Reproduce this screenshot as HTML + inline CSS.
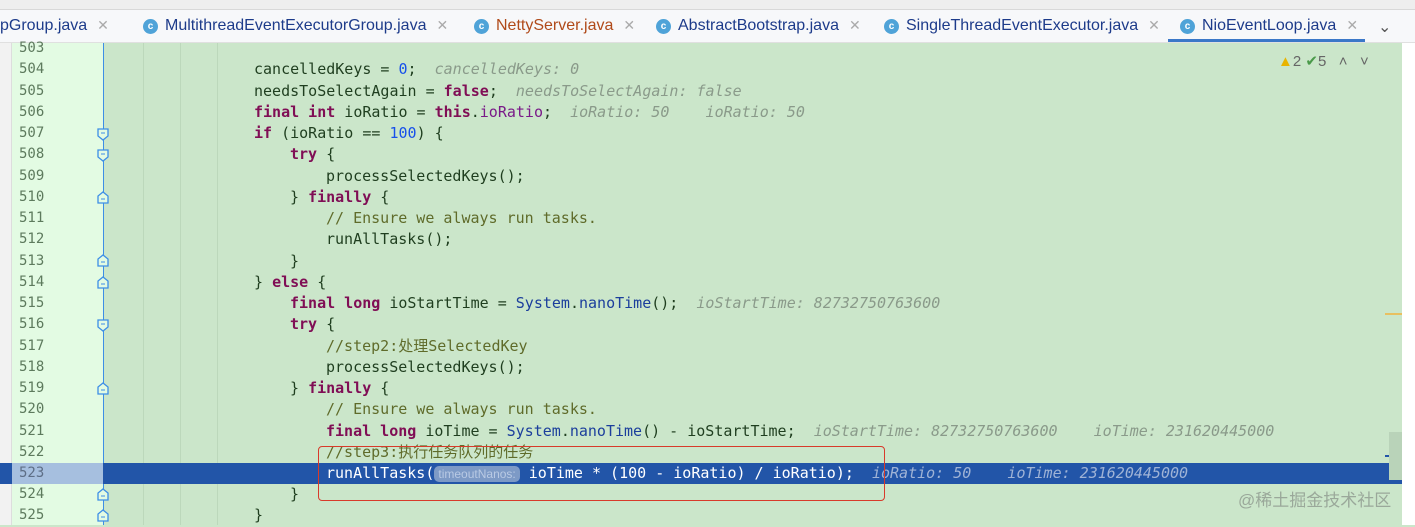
<!DOCTYPE html>
<html><head><meta charset="utf-8"><style>
*{margin:0;padding:0;box-sizing:border-box}
body{width:1415px;height:525px;overflow:hidden;background:#cbe6ca;position:relative;font-family:"DejaVu Sans Mono","Liberation Mono","Noto Sans CJK SC",monospace}
.top{position:absolute;left:0;top:0;width:1415px;height:10px;background:#eeeeee;border-bottom:1px solid #d8d8d8}
.tabs{position:absolute;left:0;top:10px;width:1415px;height:33px;background:#f7f8fa;border-bottom:1px solid #e0e0e0;font-family:"Liberation Sans","Noto Sans CJK SC",sans-serif;font-size:16px;color:#1d3b8a}
.tab{position:absolute;top:7px;white-space:nowrap}
.x{color:#aaa;font-size:14px;margin-left:10px}
.ic{display:inline-block;width:15px;height:15px;border-radius:50%;background:#4fa3d8;color:#fff;font-size:10px;text-align:center;line-height:15px;vertical-align:1px;margin-right:7px;font-weight:bold}
.left{position:absolute;left:0;top:43px;width:12px;height:482px;background:#f2f2f2;border-right:1px solid #ddd}
.gut{position:absolute;left:12px;top:43px;width:91px;height:482px;background:#e3fbe3}
.gl{position:absolute;left:103px;top:43px;width:1px;height:482px;background:#3d8ee6}
.guide{position:absolute;top:43px;width:1px;height:482px;background:#bcd8bb}
.right{position:absolute;left:1402px;top:43px;width:13px;height:482px;background:#fff}
.ln{position:absolute;left:0;width:1402px;height:21.24px;font-size:15px;line-height:21.24px;white-space:pre;color:#1f3e1f}
.num{position:absolute;left:19px;color:#5d7a5d;font-size:14px}
.code{position:absolute;left:110px}
.k{color:#800e55;font-weight:bold}
.f{color:#7a1a88}
.n{color:#1750eb}
.c{color:#5f6b2a}
.s{color:#1b3e9c}
.h{color:#8a9a8a;font-style:italic}
.sel{background:#2255a8;color:#fff}
.sel .num{color:#5d6e86}
.fold{position:absolute;left:97px;width:12px;height:13px}
</style></head><body>
<div class="top"></div>
<div class="tabs">
<span class="tab" style="left:0">pGroup.java<span class="x">✕</span></span>
<span class="tab" style="left:143px"><span class="ic">c</span>MultithreadEventExecutorGroup.java<span class="x">✕</span></span>
<span class="tab" style="left:474px;color:#b04a1a"><span class="ic">c</span>NettyServer.java<span class="x">✕</span></span>
<span class="tab" style="left:656px"><span class="ic">c</span>AbstractBootstrap.java<span class="x">✕</span></span>
<span class="tab" style="left:884px"><span class="ic">c</span>SingleThreadEventExecutor.java<span class="x">✕</span></span>
<span class="tab" style="left:1180px"><span class="ic">c</span>NioEventLoop.java<span class="x">✕</span></span>
<div style="position:absolute;left:1168px;top:29px;width:197px;height:3px;background:#3b78c8"></div>
<span class="tab" style="left:1378px;color:#555">⌄</span>
</div>
<div class="left"></div>
<div class="gut"></div>
<div class="gl"></div>
<div class="guide" style="left:143px"></div><div class="guide" style="left:180px"></div><div class="guide" style="left:217px"></div>
<div style="position:absolute;left:1278px;top:52px;font-family:'Liberation Sans',sans-serif;font-size:15px;color:#666"><span style="color:#e8b400">▲</span>2 <span style="color:#4a9a4a">✔</span>5 &nbsp;&nbsp;˄ &nbsp;&nbsp;˅</div>
<div style="position:absolute;top:38.2px;left:0;width:1402px;height:487px">
<div class="ln" style="top:0"><span class="num">503</span></div>
<div class="ln" style="top:21.24px"><span class="num">504</span><span class="code" style="left:254px">cancelledKeys = <span class="n">0</span>;  <span class="h">cancelledKeys: 0</span></span></div>
<div class="ln" style="top:42.48px"><span class="num">505</span><span class="code" style="left:254px">needsToSelectAgain = <span class="k">false</span>;  <span class="h">needsToSelectAgain: false</span></span></div>
<div class="ln" style="top:63.72px"><span class="num">506</span><span class="code" style="left:254px"><span class="k">final int</span> ioRatio = <span class="k">this</span>.<span class="f">ioRatio</span>;  <span class="h">ioRatio: 50    ioRatio: 50</span></span></div>
<div class="ln" style="top:84.96px"><span class="num">507</span><span class="code" style="left:254px"><span class="k">if</span> (ioRatio == <span class="n">100</span>) {</span></div>
<div class="ln" style="top:106.2px"><span class="num">508</span><span class="code" style="left:290px"><span class="k">try</span> {</span></div>
<div class="ln" style="top:127.44px"><span class="num">509</span><span class="code" style="left:326px">processSelectedKeys();</span></div>
<div class="ln" style="top:148.68px"><span class="num">510</span><span class="code" style="left:290px">} <span class="k">finally</span> {</span></div>
<div class="ln" style="top:169.92px"><span class="num">511</span><span class="code c" style="left:326px">// Ensure we always run tasks.</span></div>
<div class="ln" style="top:191.16px"><span class="num">512</span><span class="code" style="left:326px">runAllTasks();</span></div>
<div class="ln" style="top:212.4px"><span class="num">513</span><span class="code" style="left:290px">}</span></div>
<div class="ln" style="top:233.64px"><span class="num">514</span><span class="code" style="left:254px">} <span class="k">else</span> {</span></div>
<div class="ln" style="top:254.88px"><span class="num">515</span><span class="code" style="left:290px"><span class="k">final long</span> ioStartTime = <span class="s">System</span>.<span class="s">nanoTime</span>();  <span class="h">ioStartTime: 82732750763600</span></span></div>
<div class="ln" style="top:276.12px"><span class="num">516</span><span class="code" style="left:290px"><span class="k">try</span> {</span></div>
<div class="ln" style="top:297.36px"><span class="num">517</span><span class="code c" style="left:326px">//step2:处理SelectedKey</span></div>
<div class="ln" style="top:318.6px"><span class="num">518</span><span class="code" style="left:326px">processSelectedKeys();</span></div>
<div class="ln" style="top:339.84px"><span class="num">519</span><span class="code" style="left:290px">} <span class="k">finally</span> {</span></div>
<div class="ln" style="top:361.08px"><span class="num">520</span><span class="code c" style="left:326px">// Ensure we always run tasks.</span></div>
<div class="ln" style="top:382.32px"><span class="num">521</span><span class="code" style="left:326px"><span class="k">final long</span> ioTime = <span class="s">System</span>.<span class="s">nanoTime</span>() - ioStartTime;  <span class="h">ioStartTime: 82732750763600    ioTime: 231620445000</span></span></div>
<div class="ln" style="top:403.56px"><span class="num">522</span><span class="code c" style="left:326px">//step3:执行任务队列的任务</span></div>
<div class="ln sel" style="top:424.8px"><div style="position:absolute;left:12px;top:0;width:91px;height:100%;background:#a6bfdf"></div><span class="num">523</span><span class="code" style="left:326px">runAllTasks(<span style="font-family:'Liberation Sans',sans-serif;font-size:12px;background:#7d9ac6;color:#b9cae4;border-radius:5px;padding:1px 4px">timeoutNanos:</span> ioTime * (<span>100</span> - ioRatio) / ioRatio);  <span class="h" style="color:#9fb3d6">ioRatio: 50    ioTime: 231620445000</span></span></div>
<div class="ln" style="top:446.04px"><span class="num">524</span><span class="code" style="left:290px">}</span></div>
<div class="ln" style="top:467.28px"><span class="num">525</span><span class="code" style="left:254px">}</span></div>
</div>
<svg class="fold" style="top:128px" viewBox="0 0 12 13"><path d="M1 1H11V8L6 12L1 8Z" fill="#e3fbe3" stroke="#3d8ee6" stroke-width="1.3"/><path d="M4 5H8" stroke="#3d8ee6"/></svg>
<svg class="fold" style="top:149px" viewBox="0 0 12 13"><path d="M1 1H11V8L6 12L1 8Z" fill="#e3fbe3" stroke="#3d8ee6" stroke-width="1.3"/><path d="M4 5H8" stroke="#3d8ee6"/></svg>
<svg class="fold" style="top:191px" viewBox="0 0 12 13"><path d="M1 12H11V5L6 1L1 5Z" fill="#e3fbe3" stroke="#3d8ee6" stroke-width="1.3"/><path d="M4 8H8" stroke="#3d8ee6"/></svg>
<svg class="fold" style="top:254px" viewBox="0 0 12 13"><path d="M1 12H11V5L6 1L1 5Z" fill="#e3fbe3" stroke="#3d8ee6" stroke-width="1.3"/><path d="M4 8H8" stroke="#3d8ee6"/></svg>
<svg class="fold" style="top:276px" viewBox="0 0 12 13"><path d="M1 12H11V5L6 1L1 5Z" fill="#e3fbe3" stroke="#3d8ee6" stroke-width="1.3"/><path d="M4 8H8" stroke="#3d8ee6"/></svg>
<svg class="fold" style="top:319px" viewBox="0 0 12 13"><path d="M1 1H11V8L6 12L1 8Z" fill="#e3fbe3" stroke="#3d8ee6" stroke-width="1.3"/><path d="M4 5H8" stroke="#3d8ee6"/></svg>
<svg class="fold" style="top:382px" viewBox="0 0 12 13"><path d="M1 12H11V5L6 1L1 5Z" fill="#e3fbe3" stroke="#3d8ee6" stroke-width="1.3"/><path d="M4 8H8" stroke="#3d8ee6"/></svg>
<svg class="fold" style="top:488px" viewBox="0 0 12 13"><path d="M1 12H11V5L6 1L1 5Z" fill="#e3fbe3" stroke="#3d8ee6" stroke-width="1.3"/><path d="M4 8H8" stroke="#3d8ee6"/></svg>
<svg class="fold" style="top:509px" viewBox="0 0 12 13"><path d="M1 12H11V5L6 1L1 5Z" fill="#e3fbe3" stroke="#3d8ee6" stroke-width="1.3"/><path d="M4 8H8" stroke="#3d8ee6"/></svg>
<div style="position:absolute;left:318px;top:446px;width:567px;height:55px;border:1.5px solid #d83a2a;border-radius:4px"></div>
<div style="position:absolute;left:1238px;top:486px;font-family:'Liberation Sans','Noto Sans CJK SC',sans-serif;font-size:17px;color:#9aa89a">@稀土掘金技术社区</div>
<div style="position:absolute;left:1385px;top:313px;width:17px;height:2px;background:#e8c060"></div>
<div style="position:absolute;left:1385px;top:455px;width:17px;height:2px;background:#2255a8"></div>
<div style="position:absolute;left:1389px;top:432px;width:13px;height:48px;background:#b9d3b9"></div>
<div class="right"></div>
</body></html>
